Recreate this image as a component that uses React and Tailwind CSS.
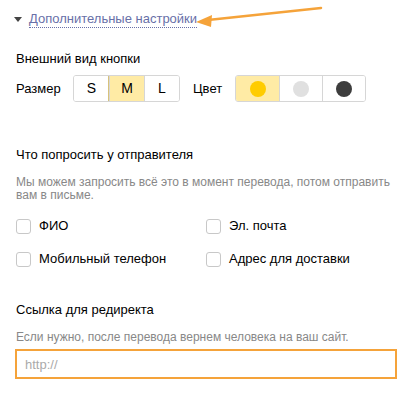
import { useState } from "react";

const sizes = ["S", "M", "L"];
const colors = [
  { id: "yellow", dot: "bg-[#ffcc00]" },
  { id: "gray", dot: "bg-[#e0e0e0]" },
  { id: "black", dot: "bg-[#3d3d3d]" },
];

function Checkbox({ label }) {
  return (
    <label className="flex items-center gap-[8px] text-[13px] leading-[16px] text-black whitespace-nowrap">
      <span className="w-[15px] h-[15px] rounded-[3px] border border-[#c8c8c8] bg-white" />
      {label}
    </label>
  );
}

export default function App() {
  const [size, setSize] = useState("M");
  const [color, setColor] = useState("yellow");

  return (
    <div className="relative w-[409px] h-[399px] bg-white text-[13px] text-black overflow-hidden font-['Liberation_Sans',Arial,sans-serif]">
      {/* стрелка-подсказка */}
      <svg
        className="absolute left-0 top-0 pointer-events-none"
        width="409"
        height="40"
        viewBox="0 0 409 40"
      >
        <path d="M321 8 L208 20" stroke="#f5a33a" strokeWidth="2.5" strokeLinecap="round" />
        <path d="M196 22 L212 15 L211 27 Z" fill="#f5a33a" />
      </svg>

      <div className="flex flex-col px-4 pt-[11px]">
        <div className="flex items-center gap-[7px] ml-[-2px]">
          <span className="w-0 h-0 border-l-[4px] border-r-[4px] border-t-[5px] border-l-transparent border-r-transparent border-t-[#444]" />
          <span className="text-[13px] text-[#6870a8] border-b border-dotted border-[#6870a8] leading-[16px] whitespace-nowrap">
            Дополнительные настройки
          </span>
        </div>

        <div className="mt-[23px] leading-[16px]">Внешний вид кнопки</div>

        <div className="flex items-center mt-[8px]">
          <span className="w-[57px]">Размер</span>
          <div className="flex h-[27px] rounded-[3px] border border-[#d6d6d6] overflow-hidden">
            {sizes.map((s, i) => (
              <button
                key={s}
                onClick={() => setSize(s)}
                className={`w-[35px] flex items-center justify-center text-[14px] ${
                  i > 0 ? "border-l border-[#d6d6d6]" : ""
                } ${size === s ? "bg-[#ffeba5] outline outline-1 outline-[#d8c27a]" : "bg-white"}`}
              >
                {s}
              </button>
            ))}
          </div>
          <span className="ml-[13px] w-[42px]">Цвет</span>
          <div className="flex h-[27px] rounded-[3px] border border-[#d6d6d6] overflow-hidden">
            {colors.map((c, i) => (
              <button
                key={c.id}
                onClick={() => setColor(c.id)}
                className={`w-[43px] flex items-center justify-center ${
                  i > 0 ? "border-l border-[#d6d6d6]" : ""
                } ${color === c.id ? "bg-[#ffeba5] outline outline-1 outline-[#d8c27a]" : "bg-white"}`}
              >
                <span className={`w-[16px] h-[16px] rounded-full ${c.dot}`} />
              </button>
            ))}
          </div>
        </div>

        <div className="mt-[45px] leading-[16px]">Что попросить у отправителя</div>
        <p className="mt-[13px] text-[12px] leading-[13px] text-[#888] whitespace-nowrap">
          Мы можем запросить всё это в момент перевода, потом отправить
          <br />
          вам в письме.
        </p>

        <div className="grid grid-cols-[190px_1fr] gap-y-[17px] mt-[16px]">
          <Checkbox label="ФИО" />
          <Checkbox label="Эл. почта" />
          <Checkbox label="Мобильный телефон" />
          <Checkbox label="Адрес для доставки" />
        </div>

        <div className="mt-[35px] leading-[16px]">Ссылка для редиректа</div>
        <p className="mt-[12px] text-[12px] leading-[14px] text-[#888] whitespace-nowrap">
          Если нужно, после перевода вернем человека на ваш сайт.
        </p>
        <input
          placeholder="http://"
          className="mt-[5px] ml-[-1px] w-[382px] h-[30px] px-[8px] border-2 border-[#f5a33a] text-[13px] outline-none placeholder:text-[#aaa]"
        />
      </div>
    </div>
  );
}
